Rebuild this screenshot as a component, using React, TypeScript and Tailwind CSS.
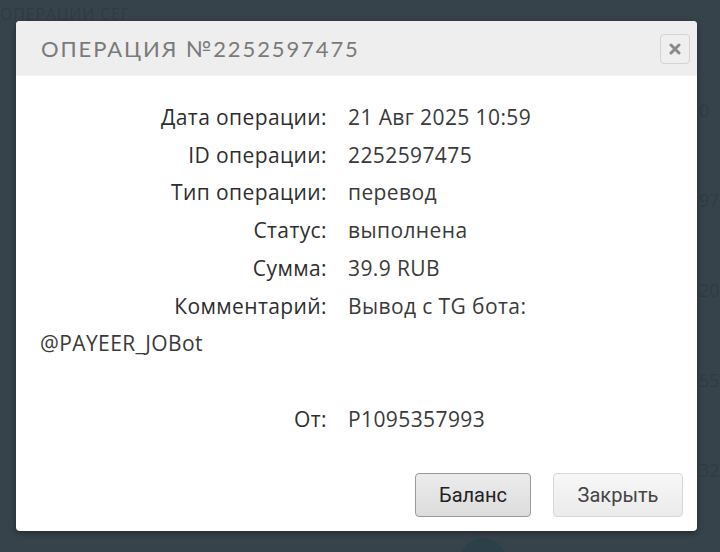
const rows: [string, string][] = [
  ["Дата операции:", "21 Авг 2025 10:59"],
  ["ID операции:", "2252597475"],
  ["Тип операции:", "перевод"],
  ["Статус:", "выполнена"],
  ["Сумма:", "39.9 RUB"],
];

const bgRight = ["0", "97", "20", "55", "32"];

export default function App() {
  return (
    <div className="relative w-[720px] h-[552px] overflow-hidden bg-[#37434b] font-['Open_Sans',sans-serif]">
      {/* page behind the overlay */}
      <div className="absolute left-0 top-[2px] text-[16px] text-[#303b42] tracking-wider">ОПЕРАЦИИ СЕГ</div>
      <div className="absolute left-[699px] top-[100px] flex flex-col gap-[70px] text-[18px] leading-[20px] text-[#303b42]">
        {bgRight.map((t) => (
          <span key={t}>{t}</span>
        ))}
      </div>
      <div className="absolute left-[460px] top-[538px] w-[46px] h-[46px] rounded-full bg-[#2b4049]" />

      <div className="absolute left-[16px] top-[21px] w-[681px] h-[510px] bg-white rounded-[4px] shadow-[0_2px_6px_rgba(0,0,0,0.4)] flex flex-col overflow-hidden">
        <div className="h-[55px] bg-[#eeeeee] border-b border-[#f4f4f4] flex items-center justify-between pl-[25px] pr-[7px]">
          <h1 className="font-['Lato',sans-serif] text-[22px] tracking-[1.9px] text-[#7a7a7a] font-normal">
            ОПЕРАЦИЯ №2252597475
          </h1>
          <button className="w-[30px] h-[30px] mt-[2px] rounded-[4px] border border-[#d4d4d4] bg-[#efefef] flex items-center justify-center text-[#8a8a8a]">
            <svg width="12" height="12" viewBox="0 0 12 12">
              <path d="M2 2 L10 10 M10 2 L2 10" stroke="currentColor" strokeWidth="3" strokeLinecap="round" />
            </svg>
          </button>
        </div>

        <div className="pl-[24px] pr-[24px] pt-[23px] text-[21px] tracking-[0.4px] leading-[37.7px] text-[#333]">
          {rows.map(([l, v]) => (
            <div key={l}>
              <span className="inline-block w-[287px] text-right text-[#2e2e2e]">{l}</span>
              <span className="ml-[21px] text-[#3a3a3a]">{v}</span>
            </div>
          ))}
          <div>
            <span className="inline-block w-[287px] text-right text-[#2e2e2e]">Комментарий:</span>
            <span className="ml-[21px] text-[#3a3a3a]">Вывод с TG бота: @PAYEER_JOBot</span>
          </div>
          <div className="h-[37.7px]" />
          <div>
            <span className="inline-block w-[287px] text-right text-[#2e2e2e]">От:</span>
            <span className="ml-[21px] text-[#3a3a3a]">P1095357993</span>
          </div>
        </div>

        <div className="mt-auto mb-[14px] flex justify-end gap-[22px] pr-[14px] font-['Roboto',sans-serif] text-[20px]">
          <button className="w-[116px] h-[44px] rounded-[4px] border border-[#9a9a9a] bg-gradient-to-b from-[#ececec] to-[#dcdcdc] text-[#222]">
            Баланс
          </button>
          <button className="w-[130px] h-[44px] rounded-[4px] border border-[#d8d8d8] bg-gradient-to-b from-[#f7f7f7] to-[#ebebeb] text-[#444]">
            Закрыть
          </button>
        </div>
      </div>
    </div>
  );
}
